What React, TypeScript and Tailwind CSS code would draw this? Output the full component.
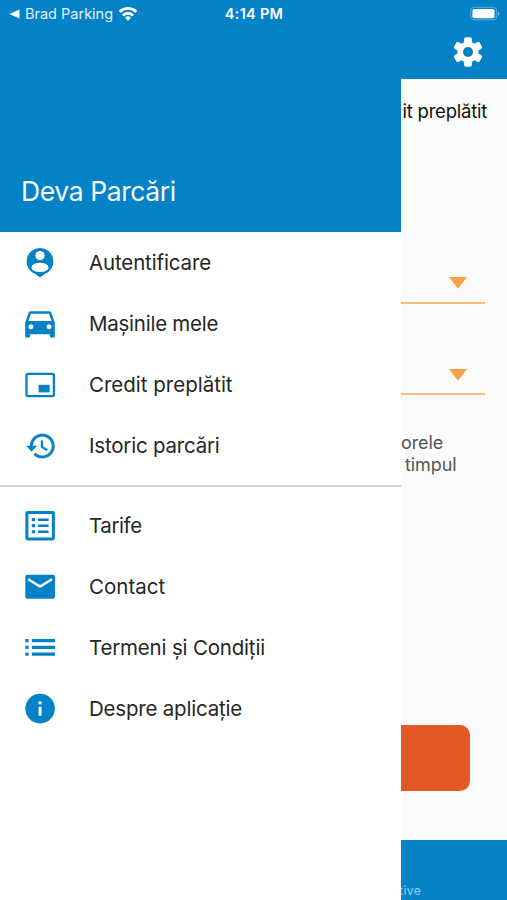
import type { ReactNode } from "react";

type MenuItem = { key: string; label: string; tracking: string; icon: ReactNode };

function Icon({ children }: { children: ReactNode }) {
  return (
    <svg viewBox="0 0 32 32" className="h-8 w-8 shrink-0" fill="#0482c8" aria-hidden>
      {children}
    </svg>
  );
}

const ACCOUNT_ITEMS: MenuItem[] = [
  {
    key: "login",
    label: "Autentificare",
    tracking: "tracking-[-0.007em]",
    icon: (
      <Icon>
        <path d="M16 1a13.4 13.4 0 0 0-4.8 25.9L16 30.5l4.8-3.6A13.4 13.4 0 0 0 16 1Z" />
        <circle cx="16" cy="8.6" r="4.6" fill="#fff" />
        <ellipse cx="16" cy="20.4" rx="8.6" ry="4.7" fill="#fff" />
      </Icon>
    ),
  },
  {
    key: "cars",
    label: "Mașinile mele",
    tracking: "tracking-[-0.012em]",
    icon: (
      <Icon>
        <path
          transform="translate(-3.8 -5.1) scale(1.65)"
          d="M18.92 6.01C18.72 5.42 18.16 5 17.5 5h-11c-.66 0-1.21.42-1.42 1.01L3 12v8c0 .55.45 1 1 1h1c.55 0 1-.45 1-1v-1h12v1c0 .55.45 1 1 1h1c.55 0 1-.45 1-1v-8l-2.08-5.99zM6.5 16c-.83 0-1.5-.67-1.5-1.5S5.67 13 6.5 13s1.5.67 1.5 1.5S7.33 16 6.5 16zm11 0c-.83 0-1.5-.67-1.5-1.5s.67-1.5 1.5-1.5 1.5.67 1.5 1.5-.67 1.5-1.5 1.5zM5 11l1.5-4.5h11L19 11H5z"
        />
      </Icon>
    ),
  },
  {
    key: "credit",
    label: "Credit preplătit",
    tracking: "tracking-[0]",
    icon: (
      <Icon>
        <rect x="2.5" y="4.9" width="27.4" height="22.3" rx="1.6" fill="none" stroke="#0482c8" strokeWidth="2.3" />
        <path d="M14.6 15.8h11v7.6h-11z" />
      </Icon>
    ),
  },
  {
    key: "history",
    label: "Istoric parcări",
    tracking: "tracking-[-0.01em]",
    icon: (
      <Icon>
        <path
          transform="translate(0.5 -0.4) scale(1.37)"
          stroke="#0482c8"
          strokeWidth="0.2"
          d="M13 3c-4.97 0-9 4.03-9 9H1.4l3.7 3.89.07.14L9 12H6c0-3.87 3.13-7 7-7s7 3.13 7 7-3.13 7-7 7c-1.93 0-3.68-.79-4.94-2.06l-1.42 1.42C8.27 19.99 10.51 21 13 21c4.97 0 9-4.03 9-9s-4.03-9-9-9zm-1 5v5l4.28 2.54.72-1.21-3.5-2.08V8H12z"
        />
      </Icon>
    ),
  },
];

const INFO_ITEMS: MenuItem[] = [
  {
    key: "prices",
    label: "Tarife",
    tracking: "tracking-[-0.02em]",
    icon: (
      <Icon>
        <rect x="2.9" y="2.4" width="26.5" height="26.5" rx="0.6" fill="none" stroke="#0482c8" strokeWidth="3" />
        <path d="M7.8 8.1h3.2v3.1H7.8zM7.8 14.1h3.2v3.1H7.8zM7.8 20.2h3.2v3.1H7.8zM14 8.4h10.6v2.6H14zM14 14.4h10.6v2.6H14zM14 20.5h10.6v2.6H14z" />
      </Icon>
    ),
  },
  {
    key: "contact",
    label: "Contact",
    tracking: "tracking-[0]",
    icon: (
      <Icon>
        <rect x="1.3" y="3.7" width="29.7" height="24" rx="2.2" />
        <path d="M4.2 8.2 16.1 15.6 28 8.2" fill="none" stroke="#fff" strokeWidth="2.4" />
      </Icon>
    ),
  },
  {
    key: "terms",
    label: "Termeni și Condiții",
    tracking: "tracking-[-0.009em]",
    icon: (
      <Icon>
        <path d="M1.3 7h3.3v3.3H1.3zM1.3 13.7h3.3V17H1.3zM1.3 20.4h3.3v3.3H1.3zM7.9 7H31v3.3H7.9zM7.9 13.7H31V17H7.9zM7.9 20.4H31v3.3H7.9z" />
      </Icon>
    ),
  },
  {
    key: "about",
    label: "Despre aplicație",
    tracking: "tracking-[-0.01em]",
    icon: (
      <Icon>
        <circle cx="16.1" cy="15.6" r="14.8" />
        <path d="M14.6 8.4h3v2.8h-3zM14.6 13.8h3v9h-3z" fill="#fff" />
      </Icon>
    ),
  },
];

function MenuList({ items }: { items: MenuItem[] }) {
  return (
    <ul>
      {items.map((item) => (
        <li key={item.key} className="flex h-[61px] items-center pl-6">
          {item.icon}
          <span className={`ml-[33px] pt-[2.5px] text-[20.5px] whitespace-nowrap text-[#262626] ${item.tracking}`}>
            {item.label}
          </span>
        </li>
      ))}
    </ul>
  );
}

function StatusBar() {
  return (
    <div className="absolute inset-x-0 top-0 z-20 flex h-7 items-center justify-between pr-[7px] pl-[9px] text-white">
      <div className="flex flex-1 items-center">
        <svg viewBox="0 0 11 10" className="h-[10px] w-[11px]" fill="currentColor" aria-hidden>
          <path d="M.5 5 10.5.6v8.8z" />
        </svg>
        <span className="ml-[5px] text-[14.5px] tracking-[0] whitespace-nowrap text-[#e2f1fa]">Brad Parking</span>
        <svg viewBox="0 0 20 15" className="mb-[2px] ml-[5px] h-[15px] w-5" fill="none" stroke="currentColor" strokeWidth="2.8" aria-hidden>
          <path d="M1.7 5.8a12 12 0 0 1 16.6 0M4.9 9.4a7.3 7.3 0 0 1 10.2 0" />
          <path d="m10 14.8 2.9-3.1a4.1 4.1 0 0 0-5.8 0z" fill="currentColor" stroke="none" />
        </svg>
      </div>
      <span className="pr-[1px] text-[14.5px] font-semibold tracking-[0.02em]">4:14 PM</span>
      <div className="flex flex-1 justify-end">
        <svg viewBox="0 0 30 15" className="mb-[2px] h-[15px] w-[30px]" aria-hidden>
          <rect x="0.7" y="1.3" width="26" height="12.6" rx="3.6" fill="none" stroke="#5aaedb" />
          <rect x="2.4" y="3" width="22.2" height="9.2" rx="2" fill="#fff" />
          <path d="M28 5.4a2.5 2.5 0 0 1 0 4.4z" fill="#79bce2" />
        </svg>
      </div>
    </div>
  );
}

function DropArrow() {
  return (
    <svg viewBox="0 0 18 12" className="h-3 w-[18px]" fill="#f9a243" aria-hidden>
      <path d="M0 0h18L9 11.7z" />
    </svg>
  );
}

function ParkingPage() {
  return (
    <main className="flex h-full flex-col bg-[#fbfbfb]">
      <header className="flex h-[79px] shrink-0 items-end justify-end bg-[#0482c8] pr-[23px] pb-[11px]">
        <svg viewBox="-16 -16 32 32" className="h-8 w-8" fill="#fff" aria-hidden>
          <rect x="-3.9" y="-14.8" width="7.8" height="29.6" rx="2" />
          <rect x="-3.9" y="-14.8" width="7.8" height="29.6" rx="2" transform="rotate(60)" />
          <rect x="-3.9" y="-14.8" width="7.8" height="29.6" rx="2" transform="rotate(120)" />
          <circle r="10.6" />
          <circle r="5" fill="#0482c8" />
        </svg>
      </header>
      <p className="mt-[20px] h-6 pr-5 text-right text-[18.5px] leading-6 tracking-[-0.013em] text-[#111]">it preplătit</p>
      <div className="mt-[139px] mr-[22px] flex h-[42px] items-center justify-end border-b-2 border-[#f8bd80] pt-[2px] pr-[18px]">
        <DropArrow />
      </div>
      <div className="mt-[49px] mr-[22px] flex h-[42px] items-center justify-end border-b-2 border-[#f8bd80] pt-[3px] pr-[18px]">
        <DropArrow />
      </div>
      <div className="mt-[37px] ml-[401px] text-[18px] leading-[22px] tracking-[-0.005em] text-[#555]">
        <p>orele</p>
        <p className="pl-[4px]">timpul</p>
      </div>
      <div className="mt-[249px] mr-[37px] h-[66px] shrink-0 rounded-[10px] bg-[#e35824]" />
      <footer className="mt-auto h-[60px] shrink-0 bg-[#0482c8] pt-[43px] pl-[399px] text-[12px] leading-4 tracking-[0.04em] text-[#a3cfe9]">
        tive
      </footer>
    </main>
  );
}

export default function App() {
  return (
    <div className="relative h-[900px] w-[507px] overflow-hidden font-['Inter',sans-serif]">
      <ParkingPage />
      <aside className="absolute inset-y-0 left-0 z-10 w-[401px] bg-white">
        <div className="flex h-[232px] items-end bg-[#0482c8] pb-[21px] pl-[21px]">
          <h1 className="text-[26.5px] leading-10 tracking-[-0.015em] whitespace-nowrap text-[#f6fbfe]">Deva Parcări</h1>
        </div>
        <MenuList items={ACCOUNT_ITEMS} />
        <hr className="mt-[9px] mb-[8px] border-t-2 border-[#d3d3d3]" />
        <MenuList items={INFO_ITEMS} />
      </aside>
      <StatusBar />
    </div>
  );
}
